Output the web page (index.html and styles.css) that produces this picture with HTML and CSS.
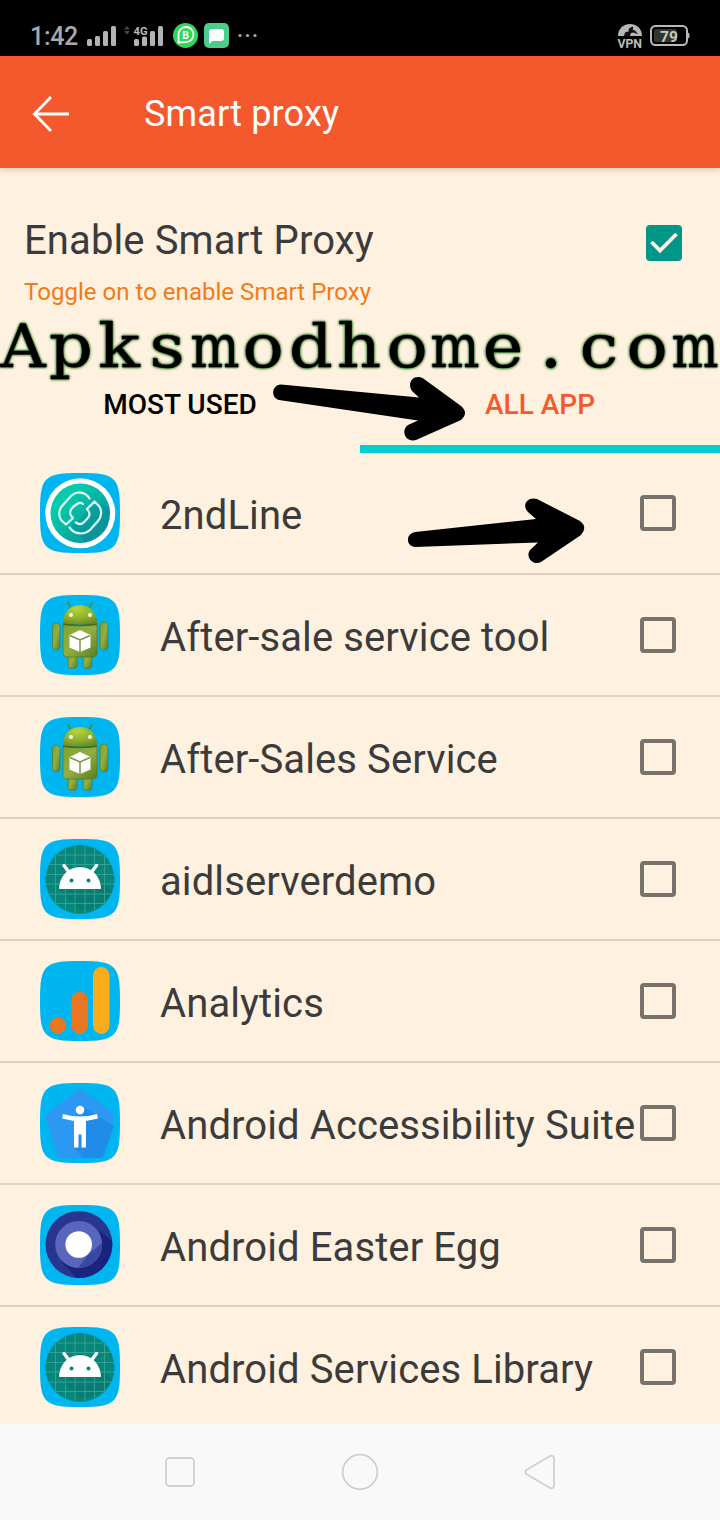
FILE: index.html
```html
<!DOCTYPE html>
<html lang="en">
<head>
<meta charset="utf-8">
<title>Smart proxy</title>
<link rel="stylesheet" href="styles.css">
</head>
<body>
<svg class="defs" width="0" height="0">
  <defs>
    <linearGradient id="line-green" x1="0" y1="0" x2="1" y2="1"><stop offset="0.25" stop-color="#04cbaa"/><stop offset="0.8" stop-color="#0c9a9e"/></linearGradient>
    <radialGradient id="bot-green" cx="0.4" cy="0.2" r="0.9"><stop offset="0" stop-color="#b5d53f"/><stop offset="0.6" stop-color="#8aac2e"/><stop offset="1" stop-color="#5f8421"/></radialGradient>
    <linearGradient id="bot-body" x1="0" y1="0" x2="1" y2="1"><stop offset="0" stop-color="#7fa32c"/><stop offset="0.5" stop-color="#93ad42"/><stop offset="1" stop-color="#587e1f"/></linearGradient>
    <path id="tile" d="M0 40C0 21 1 12 6.500 6.500S21 0 40 0 68 1 73.500 6.500 80 21 80 40 79 68 73.500 73.500 59 80 40 80 12 79 6.500 73.500 0 59 0 40z" fill="#00b6f0"/>
    <symbol id="robot" viewBox="0 0 80 80">
      <use href="#tile"/>
      <path d="M31 13l-3-5M49 13l3-5" stroke="#4d913c" stroke-width="2" stroke-linecap="round"/>
      <g fill="url(#bot-body)" stroke="#4c7426" stroke-width=".6">
        <rect x="12.500" y="28" width="7.500" height="27" rx="3.700"/><rect x="60" y="27" width="8" height="28" rx="4"/>
        <rect x="28" y="56" width="9" height="17.500" rx="4"/><rect x="43" y="56" width="9" height="17.500" rx="4"/>
        <path d="M23 30h34v28q0 4-5 4H28q-5 0-5-4z"/>
      </g>
      <path d="M23 28C23 4 57 4 57 28q-17 3-34 0z" fill="url(#bot-green)"/>
      <path d="M23 29q17 3 34 0" fill="none" stroke="#486c1b" stroke-width="1.500"/>
      <circle cx="31" cy="20" r="2" fill="#f4ffe0"/><circle cx="50" cy="20" r="2" fill="#f4ffe0"/>
      <path d="M40 35l10.500 5v12.500L40 57l-10.500-4.500V40z" fill="#fff"/>
      <path d="M30 40.500l10 4.500 10-4.500M40 45v12" fill="none" stroke="#799448" stroke-width="1.500"/>
    </symbol>
    <symbol id="droid" viewBox="0 0 80 80">
      <use href="#tile"/>
      <circle cx="40" cy="40.500" r="34.500" fill="#07867a"/>
      <path d="M19 50l21 21a34 34 0 0 0 32-19L60 42z" fill="#046f69" opacity=".4"/>
      <path d="M15.500 17v47M25.500 10v61M35 6.500v68M45 6.500v68M54.500 10v61M64.500 17v47M16.500 16h47M9.500 25.500h61M6 35.500h68M6 45h68M9 55h62M15.500 64.500h49" stroke="#3ca294" stroke-width=".9"/>
      <path d="M19 50C20 21 60 21 61 50z" fill="#fff"/>
      <path d="M29 33l-5-6.500M51.500 33l5-6.500" stroke="#fff" stroke-width="3.400" stroke-linecap="round"/>
      <circle cx="31.500" cy="41.500" r="2" fill="#07867a"/><circle cx="48.500" cy="41.500" r="2" fill="#07867a"/>
    </symbol>
  </defs>
</svg>
<div class="phone">
  <header class="status">
    <span class="clock">1:42</span>
    <svg class="status-icons" width="180" height="30" viewBox="84 20 180 30">
      <g fill="#b3b3b3"><rect x="87" y="39" width="5" height="7" rx="1.500"/><rect x="95" y="36" width="5" height="10" rx="1.500"/><rect x="103" y="31" width="5" height="15" rx="1.500"/><rect x="111" y="26" width="5" height="20" rx="1.500"/>
      <rect x="134" y="39" width="5" height="7" rx="1.500"/><rect x="142" y="36.500" width="5" height="9.500" rx="1.500"/><rect x="150" y="31" width="5" height="15" rx="1.500"/><rect x="158" y="26" width="5" height="20" rx="1.500"/></g>
      <path d="M124 29.500l3-3.500 3 3.500zM124 31l3 3.500 3-3.500z" fill="#454545"/>
      <text class="net" x="133.500" y="34.500" textLength="14" lengthAdjust="spacingAndGlyphs">4G</text>
      <circle cx="185.500" cy="35.500" r="12.500" fill="#2fd957"/>
      <path d="M178.500 42.500V34.500a7.500 7.500 0 1 1 7.500 7.500z" fill="none" stroke="#fff" stroke-width="1.800"/>
      <text class="biz" x="182.300" y="39.300">B</text>
      <rect x="204" y="23" width="25" height="25" rx="5" fill="#4bcd8b"/>
      <path d="M212 29h9q3 0 3 3v6q0 3-3 3h-8.500l-3.500 3V32q0-3 3-3z" fill="#fff"/>
      <g fill="#aaa"><circle cx="240" cy="35.500" r="1.600"/><circle cx="247.500" cy="35.500" r="1.600"/><circle cx="255" cy="35.500" r="1.600"/></g>
    </svg>
    <svg class="status-right" width="76" height="30" viewBox="616 20 76 30">
      <path d="M618 36C618 20 642 20 642 36z" fill="#b7b7b7"/>
      <path d="M624 36l1-3.500 3.500-1 .5-3 3.500-2 1 1.500-1 1.500 3 1.500 2.500 3-2-.5-2.500-1-2.500.5-1 3z" fill="#111"/>
      <text class="vpn" x="617.500" y="48" textLength="24.500" lengthAdjust="spacingAndGlyphs">VPN</text>
      <rect x="651" y="26" width="36" height="19" rx="4.500" fill="none" stroke="#b9b9b9" stroke-width="2"/>
      <path d="M687.500 32.500q2 0 2 3t-2 3z" fill="#b9b9b9"/>
      <rect x="654" y="29" width="23" height="13" rx="2" fill="#30372f"/>
      <text class="level" x="660" y="41.500">79</text>
    </svg>
  </header>
  <nav class="appbar">
    <svg class="back" width="38" height="38" viewBox="0 0 38 38"><path d="M19 2L2.500 19 19 36M2.500 19H37" fill="none" stroke="#fff" stroke-width="2.800"/></svg>
    <h1 class="title">Smart proxy</h1>
  </nav>
  <section class="setting">
    <div>
      <div class="setting-name">Enable Smart Proxy</div>
      <div class="setting-note">Toggle on to enable Smart Proxy</div>
    </div>
    <svg class="checked" width="36" height="36" viewBox="0 0 36 36"><rect width="36" height="36" rx="4" fill="#009688"/><path d="M5.500 17l8.500 8.500L30.500 9" fill="none" stroke="#fff1df" stroke-width="3.800"/></svg>
  </section>
  <div class="tabs">
    <div class="tab"><span class="tab-label">MOST USED</span></div>
    <div class="tab active"><span class="tab-label">ALL APP</span></div>
  </div>
  <main class="list">
    <div class="row"><svg class="icon" viewBox="0 0 80 80"><use href="#tile"/><circle cx="40.300" cy="40.300" r="35" fill="#fff"/><circle cx="40.300" cy="40.300" r="29.800" fill="url(#line-green)"/><path d="M31 53l13 16q17-2 24-16l1-20-12-3z" fill="#087f8d" opacity=".28"/><g fill="none" stroke="#ddfff7" stroke-width="2.200" stroke-linecap="round" stroke-linejoin="round"><path d="M49.500 25.500C45 18 36 18 31 23L22 33C18 38 19 44 21 47L26 51.500 33 45C29 41 29 38 33 34L37 31C40 29 42 30 43 31"/><path d="M29.500 54.500C35 62 44 62 50 57L58 48C62 43 62 37 59 33L54.500 28.500 47 36C51 40 50 43 47 46L43 50C40 52 38 51 36 49.500"/></g></svg><span class="name">2ndLine</span><span class="box"></span></div>
    <div class="row"><svg class="icon"><use href="#robot"/></svg><span class="name">After-sale service tool</span><span class="box"></span></div>
    <div class="row"><svg class="icon"><use href="#robot"/></svg><span class="name">After-Sales Service</span><span class="box"></span></div>
    <div class="row"><svg class="icon"><use href="#droid"/></svg><span class="name">aidlserverdemo</span><span class="box"></span></div>
    <div class="row"><svg class="icon" viewBox="0 0 80 80"><use href="#tile"/><circle cx="18" cy="64.500" r="8.300" fill="#ea7720"/><rect x="31.500" y="31" width="16.500" height="42" rx="8.250" fill="#ea7720"/><rect x="53" y="6" width="16.500" height="67" rx="8.250" fill="#f8ab1b"/></svg><span class="name">Analytics</span><span class="box"></span></div>
    <div class="row"><svg class="icon" viewBox="0 0 80 80"><use href="#tile"/><path d="M37 7q3-2 6 0l29 22q3 2 2 6L63 71q-1 4-5 4H22q-4 0-5-4L6 36q-1-4 2-6z" fill="#2c98f1"/><path d="M45 25l29 18-10 29q-1 3-5 3H43l-9-11z" fill="#218be8"/><circle cx="40" cy="27" r="4.300" fill="#fff"/><path d="M23 31q17 5 34 0l1 4.500-12 2.500v26.500h-4.500V51.500h-3v13H34V38l-12-2.500z" fill="#fff"/></svg><span class="name">Android Accessibility Suite</span><span class="box"></span></div>
    <div class="row"><svg class="icon" viewBox="0 0 80 80"><use href="#tile"/><circle cx="39" cy="39.500" r="33.500" fill="#28368f"/><path d="M60 26l12 10A33.500 33.500 0 0 1 36 73L22 57z" fill="#1a237e"/><circle cx="38.700" cy="39.500" r="23.500" fill="#5867bd"/><path d="M48 50l14-12a23.500 23.500 0 0 1-24 25z" fill="#3948a2"/><circle cx="38.700" cy="39.500" r="13.300" fill="#fff"/></svg><span class="name">Android Easter Egg</span><span class="box"></span></div>
    <div class="row"><svg class="icon"><use href="#droid"/></svg><span class="name">Android Services Library</span><span class="box"></span></div>
  </main>
  <footer class="navbar">
    <svg width="38" height="38" viewBox="0 0 38 38"><rect x="5" y="5" width="28" height="28" rx="3.500"/></svg>
    <svg width="38" height="38" viewBox="0 0 38 38"><circle cx="19" cy="19" r="17.300"/></svg>
    <svg width="38" height="38" viewBox="0 0 38 38"><path d="M5.200 17L29 3q3.700-1 4 2v28q-.3 3-4 2L5.200 21q-1.800-2 0-4z"/></svg>
  </footer>
  <div class="watermark"><span class="cap">A</span><span>p</span><span>k</span><span>s</span><span class="wide">m</span><span>o</span><span>d</span><span>h</span><span>o</span><span class="wide">m</span><span>e</span><span class="dot">.</span><span>c</span><span>o</span><span class="wide last">m</span></div>
  <svg class="arrow arrow-tab" width="194" height="66" viewBox="272 376 194 66"><path d="M281 384.500L419 397.500 412 391C406 382 415 373 424 379L461 406Q469 413 461 420L416 440C406 443 400 431 408 425L418 420.500 279 400C270 397 272 385 281 384.500z"/></svg>
  <svg class="arrow arrow-row" width="178" height="66" viewBox="408 498 178 66"><path d="M415 532L536 519 528 512C521 505 528 496 537 499L580 521Q588 527 581 535L541 562C533 566 525 557 530 550L538 542.500 415 547C406 546 405 534 415 532z"/></svg>
</div>
</body>
</html>
```
FILE: styles.css
```css
* { box-sizing: border-box; }
body { margin: 0; background: #fff1df; font-family: Roboto, "Noto Sans", sans-serif; }
.defs { position: absolute; }
svg { display: block; flex: none; }
.phone { position: relative; width: 720px; height: 1520px; overflow: hidden; display: flex; flex-direction: column; }
.status { height: 56px; flex: none; background: #000; display: flex; align-items: flex-start; padding: 20px 28px 0 30px; }
.clock { width: 54px; font-size: 25px; font-weight: 500; line-height: 34px; letter-spacing: -.3px; color: #aaa; }
.status-right { margin-left: auto; }
.net { font: 700 11.500px Roboto, sans-serif; fill: #bbb; }
.biz { font: 700 10.500px Roboto, sans-serif; fill: #fff; }
.vpn { font: 700 13.500px Roboto, sans-serif; fill: #bbb; }
.level { font: 700 15.500px Roboto, sans-serif; fill: #c9c9c1; }
.appbar { height: 112px; flex: none; background: #f3592d; display: flex; align-items: center; padding: 4px 32px 0; box-shadow: 0 2px 6px rgba(70, 50, 30, .2); }
.title { margin: 0 0 0 74px; color: #fff; font-size: 36px; font-weight: 400; line-height: 48px; letter-spacing: .15px; white-space: nowrap; }
.setting { height: 189px; flex: none; display: flex; justify-content: space-between; padding: 49px 38px 0 24px; }
.setting-name { font-size: 40px; line-height: 48px; letter-spacing: .12px; color: #3b3b3b; }
.setting-note { margin-top: 11px; font-size: 24px; line-height: 32px; letter-spacing: .03px; color: #f07b19; }
.checked { margin-top: 8px; }
.tabs { height: 96px; flex: none; display: grid; grid-template-columns: 1fr 1fr; }
.tab { display: flex; justify-content: center; padding-top: 32px; font-size: 28px; font-weight: 500; line-height: 32px; border-bottom: 8px solid transparent; color: #000; }
.active { color: #f3592d; border-color: #00cfcf; }
.list { flex: 1; min-height: 0; overflow: hidden; }
.row { height: 122px; display: flex; align-items: center; padding: 0 44px 0 40px; border-bottom: 2px solid #dfd2c4; }
.icon { width: 80px; height: 80px; }
.name { flex: 1; min-width: 0; margin-left: 40px; padding-top: 6px; font-size: 40px; line-height: 48px; letter-spacing: .1px; color: #3b3b3b; white-space: nowrap; }
.box { width: 36px; height: 36px; flex: none; border: 4px solid #77736a; border-radius: 4px; }
.navbar { height: 96px; flex: none; background: #f9f9f9; display: flex; justify-content: center; align-items: center; gap: 142px; }
.navbar svg { fill: none; stroke: #d0d0d0; stroke-width: 1.800; }
.watermark { position: absolute; left: -1px; top: 310px; display: flex; font: 60px/72px "DejaVu Serif", serif; color: #000; -webkit-text-stroke: .5px #000; text-shadow: 0 0 2px #3f8739, 0 0 2px #3f8739, 0 0 3px #3f8739, 0 0 3px #3f8739; }
.watermark span { width: 48px; display: flex; justify-content: center; transform: scaleX(1.14); }
.watermark .cap { transform: scaleX(1.04); }
.watermark .wide { width: 48px; transform: scaleX(.86); }
.watermark .last { transform: scaleX(.82); }
.watermark .dot { transform: scale(1.2); transform-origin: 50% 76%; }
.arrow { position: absolute; fill: #000; }
.arrow-tab { left: 272px; top: 376px; }
.arrow-row { left: 408px; top: 498px; }
```
